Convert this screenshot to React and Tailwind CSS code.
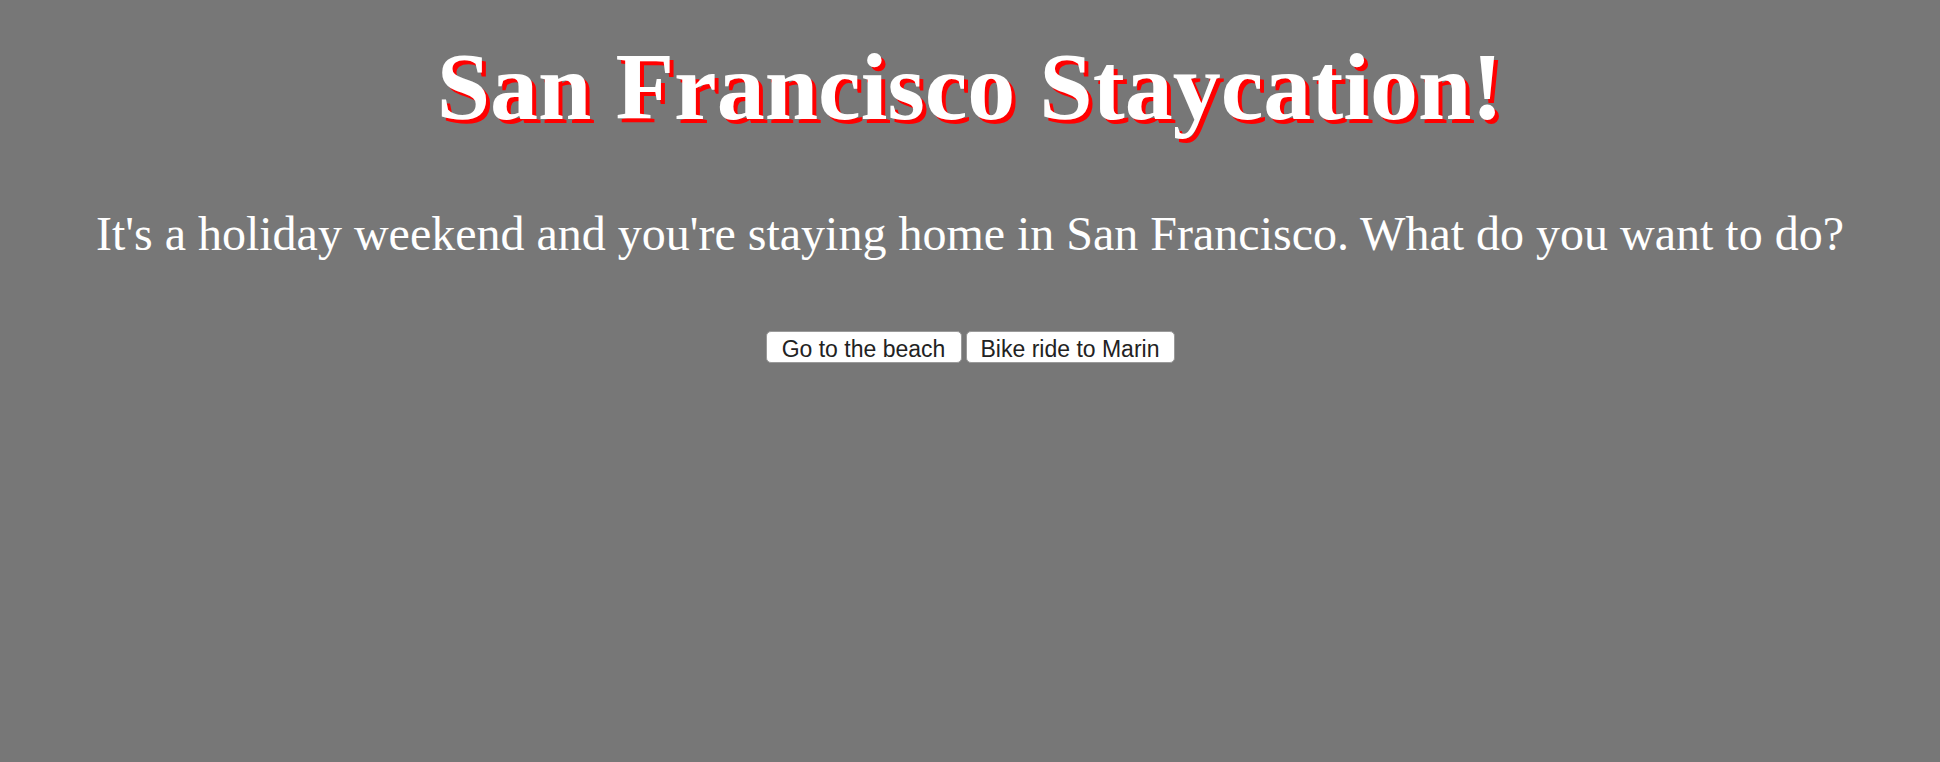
import React from 'react';

const App = () => {
  const choose = (c) => console.log(c);

  return (
    <div className="min-h-screen bg-[#777777] text-center text-white font-['Liberation_Serif',serif]">
      <h1 className="pt-[32px] text-[96px] font-bold leading-[110px] [text-shadow:4px_4px_0_#ff0000]">
        San Francisco Staycation!
      </h1>
      <p className="mt-[64px] text-[48px] leading-[56px]">
        It's a holiday weekend and you're staying home in San Francisco. What do you want to do?
      </p>
      <div className="mt-[69px] flex justify-center gap-[4px] font-['Liberation_Sans',sans-serif] text-[23px] text-[#222222]">
        <button
          className="h-[32px] w-[196px] rounded-[5px] border border-[#9a9a9a] bg-white"
          onClick={() => choose('beach')}
        >
          Go to the beach
        </button>
        <button
          className="h-[32px] w-[209px] rounded-[5px] border border-[#9a9a9a] bg-white"
          onClick={() => choose('marin')}
        >
          Bike ride to Marin
        </button>
      </div>
    </div>
  );
};

export default App;
